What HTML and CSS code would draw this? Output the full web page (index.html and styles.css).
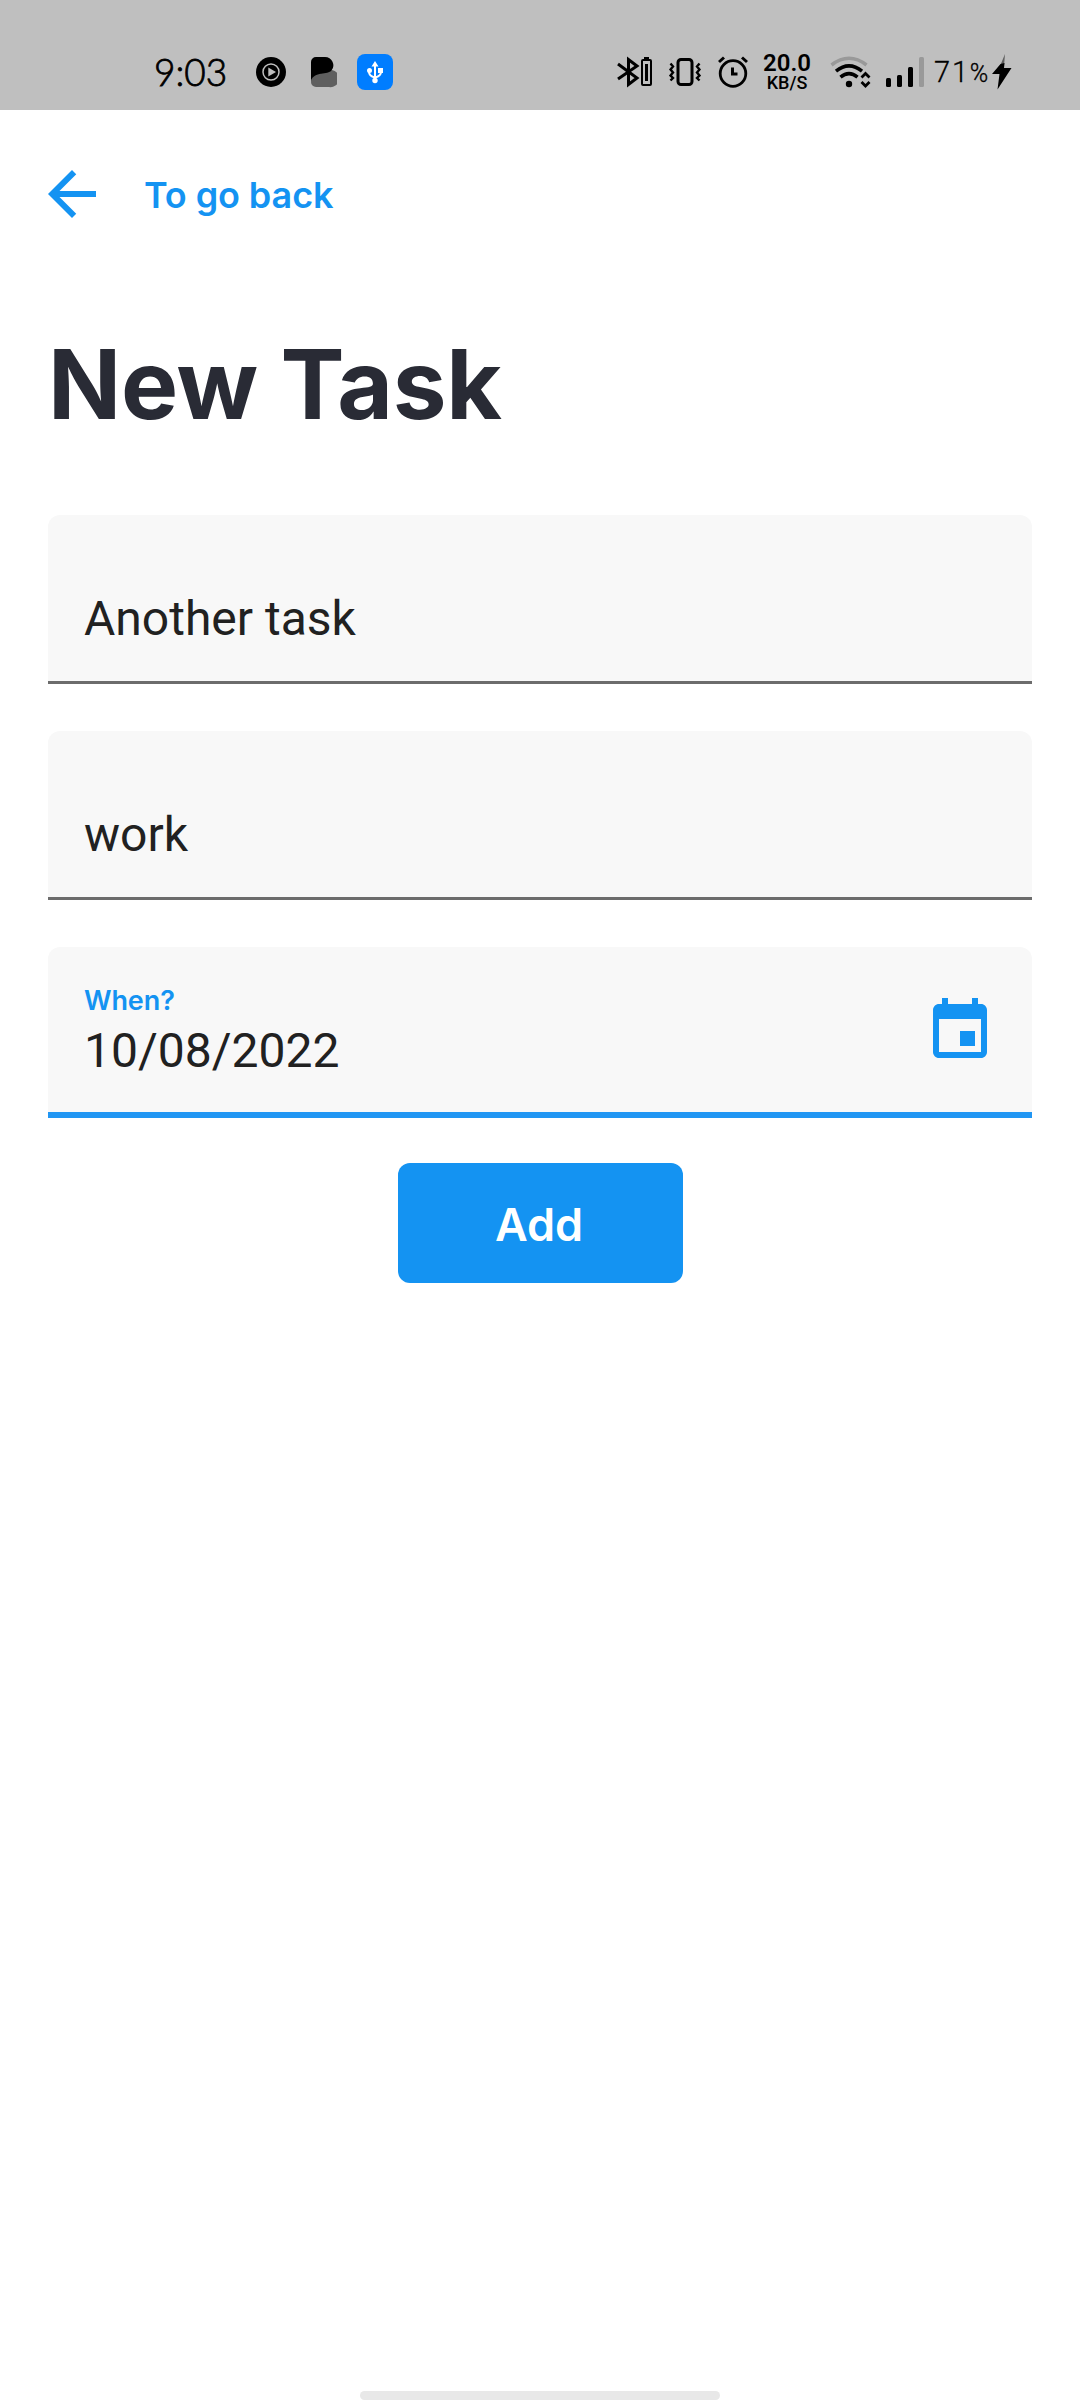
FILE: index.html
```html
<!DOCTYPE html>
<html lang="en">
<head>
<meta charset="utf-8">
<title>New Task</title>
<link rel="stylesheet" href="styles.css">
</head>
<body>
<div class="screen">
  <header class="status">
    <span class="clock">9:03</span>
    <svg class="icon play" width="30" height="36" viewBox="0 0 30 36"><circle cx="15" cy="18" r="15"/><circle cx="15" cy="18" r="8" fill="none" stroke="#bfbfbf" stroke-width="1.5"/><path d="M12.300 13.500 20 18l-7.700 4.500z" fill="#bfbfbf"/></svg>
    <svg class="icon brand" width="26" height="36" viewBox="0 0 26 36"><path d="M10 19l11-3a8.500 8.500 0 0 1-3 17H5a5 5 0 0 1-5-5c0-5 4-9 10-9z" fill="#5f5f5f"/><path d="M5 3h9a8.300 8.300 0 0 1 6.500 13.500C17 21 3 17 0 27V8a5 5 0 0 1 5-5z"/></svg>
    <svg class="icon usb" width="36" height="36" viewBox="0 0 36 36"><rect width="36" height="36" rx="8" fill="#007dff"/><g fill="none" stroke="#fff" stroke-width="2"><path d="M18 10v17M12 16v2q0 4 6 5.500M24 16v2q0 4-6 5.500"/></g><path d="m18 7 3.500 5.500h-7zM21 14h5v5h-5z" fill="#fff"/><circle cx="12.500" cy="16.500" r="2.500" fill="#fff"/><circle cx="18" cy="26.500" r="2.700" fill="#fff"/></svg>
    <div class="spacer"></div>
    <svg class="icon bluetooth" width="36" height="36" viewBox="0 0 36 36"><path d="m1 10 19 14-8.500 6.500v-25L20 12 1 25" fill="none" stroke="#000" stroke-width="3"/><rect x="25" y="6" width="9" height="25" rx="1" fill="none" stroke="#000" stroke-width="2"/><path d="M27 3h5v3h-5zM28 10h3v17h-3z"/></svg>
    <svg class="icon vibrate" width="32" height="36" viewBox="0 0 32 36"><rect x="9" y="5.500" width="14" height="25" rx="3" fill="none" stroke="#000" stroke-width="3"/><path d="m1.500 9.500 2.500 3-2.500 3 2.500 3-2.500 3 2.500 2.500-2.500 2.500M30.500 9.500l-2.500 3 2.500 3-2.500 3 2.500 3-2.500 2.500 2.500 2.500" fill="none" stroke="#000" stroke-width="2.400"/></svg>
    <svg class="icon alarm" width="30" height="36" viewBox="0 0 30 36"><g fill="none" stroke="#000"><circle cx="15" cy="19.500" r="12.800" stroke-width="2.800"/><path d="m1 8 5-4.500M29 8l-5-4.500" stroke-width="3"/><path d="M14.500 13.500V20h5" stroke-width="3"/></g></svg>
    <div class="speed"><b>20.0</b><small>KB/S</small></div>
    <svg class="icon wifi" width="41" height="36" viewBox="0 0 41 36"><g fill="none" stroke="#000" stroke-width="3.500"><path d="M1.500 11Q19 -2.500 36.500 11" stroke="#999" stroke-width="3.500"/><path d="M6 17.200Q19 6.500 32 17.200M10.500 23.200Q19 16 27.500 23.200"/><path d="m31.500 23.500 4-4 4 4M31.500 28l4 4 4-4" stroke-width="2.800"/></g><circle cx="19" cy="30" r="3.200"/></svg>
    <svg class="icon signal" width="38" height="36" viewBox="0 0 38 36"><rect y="24" width="5" height="9" rx="1.500"/><rect x="11" y="21" width="5" height="12" rx="1.500"/><rect x="22" y="13" width="5" height="20" rx="1.500"/><rect x="33" y="3" width="5" height="30" rx="1.500" fill="#999"/></svg>
    <span class="percent">71<small>%</small></span>
    <svg class="icon bolt" width="20" height="36" viewBox="0 0 20 36"><path d="m13 0-5 12h4z" fill="#5f5f5f"/><path d="M8.500 10 0 20h7.500L5.500 35.500 19.500 14h-7.500L12.500 9z"/></svg>
  </header>

  <main class="page">
    <nav class="back">
      <svg width="48" height="48" viewBox="0 0 16 16"><path d="M16 7H3.830l5.590-5.590L8 0 0 8l8 8 1.410-1.410L3.830 9H16z" fill="#1493f2"/></svg>
      <span class="back-text">To go back</span>
    </nav>
    <h1 class="title">New Task</h1>
    <form class="form">
      <div class="field"><span class="value">Another task</span></div>
      <div class="field"><span class="value">work</span></div>
      <div class="field active">
        <div class="entry"><label class="label">When?</label><span class="value">10/08/2022</span></div>
        <svg width="72" height="72" viewBox="0 0 24 24"><path d="M17 12h-5v5h5v-5zM16 1v2H8V1H6v2H5c-1.110 0-1.990.9-1.990 2L3 19c0 1.100.89 2 2 2h14c1.100 0 2-.9 2-2V5c0-1.100-.9-2-2-2h-1V1h-2zm3 18H5V8h14v11z" fill="#1493f2"/></svg>
      </div>
      <button class="add" type="button">Add</button>
    </form>
  </main>
  <div class="handle"></div>
</div>
</body>
</html>
```
FILE: styles.css
```css
* { box-sizing: border-box; }
body { margin: 0; background: #fff; font-family: Inter, sans-serif; }
.screen { width: 1080px; height: 2400px; display: flex; flex-direction: column; background: #fff; }
.status { height: 110px; flex: none; padding: 34px 68px 0 154px; display: flex; align-items: center; background: #bfbfbf; color: #000; }
.icon { flex: none; display: block; }
.clock { width: 102px; padding-bottom: 1px; font: 300 37px/40px Lato, sans-serif; -webkit-text-stroke: 0.8px #000; white-space: nowrap; }
.brand { margin-left: 25px; }
.usb { margin-left: 20px; }
.spacer { flex: 1; }
.vibrate { margin-left: 16px; }
.alarm { margin-left: 17px; }
.speed { width: 50px; margin: 0 18px 0 14px; display: flex; flex-direction: column; align-items: center; font-family: Roboto, sans-serif; }
.speed b { font-size: 24px; line-height: 21px; font-weight: 600; }
.speed small { font-size: 18px; line-height: 18px; font-weight: 500; }
.signal { margin-left: 15px; }
.percent { width: 68px; padding: 2px 0 0 10px; font: 300 29px/36px Roboto, sans-serif; -webkit-text-stroke: 0.3px #000; letter-spacing: 1.8px; white-space: nowrap; }
.percent small { font-size: 25px; letter-spacing: 0; }
.page { flex: 1; padding: 60px 48px 0; }
.back { height: 48px; display: flex; align-items: center; gap: 48px; color: #1493f2; font-size: 36px; font-weight: 600; }
.back-text { padding-top: 2px; letter-spacing: -0.1px; }
.title { margin: 108px 0 0; color: #292b35; font-size: 96px; line-height: 116px; font-weight: 700; letter-spacing: -0.25px; }
.form { margin-top: 73px; display: flex; flex-direction: column; gap: 47px; }
.field { height: 169px; padding: 0 36px; display: flex; align-items: flex-end; justify-content: space-between; background: #f8f8f8; border-bottom: 3px solid #6c6c6c; border-radius: 12px 12px 0 0; }
.value { display: block; height: 56px; margin-bottom: 34px; color: #212121; font: 400 48px/56px Roboto, sans-serif; }
.active { height: 171px; border-bottom: 6px solid #2196f3; }
.active .value { margin-bottom: 33px; }
.active svg { margin-bottom: 45px; }
.entry { display: flex; flex-direction: column; }
.label { height: 39px; color: #1493f2; font-size: 27px; line-height: 34px; font-weight: 600; letter-spacing: -0.1px; }
.add { align-self: center; width: 285px; height: 120px; margin-top: -2px; padding: 3px 2px 0 0; border: 0; border-radius: 12px; background: #1493f2; color: #fff; font: 600 45px/117px Inter, sans-serif; }
.handle { flex: none; align-self: center; width: 360px; height: 9px; border-radius: 5px; background: #e8e8e8; }
```
